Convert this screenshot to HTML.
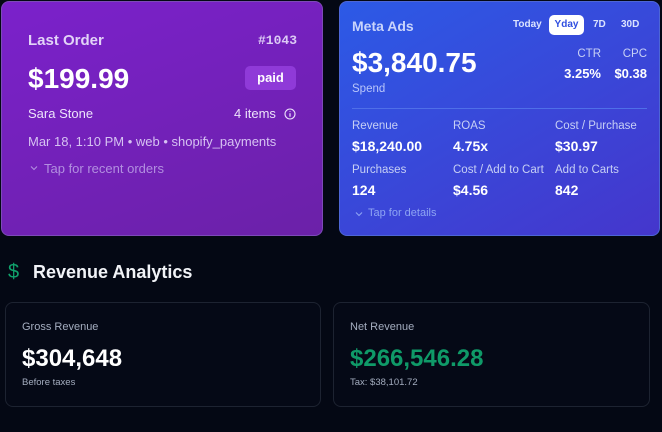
<!DOCTYPE html>
<html><head><meta charset="utf-8"><style>
*{margin:0;padding:0;box-sizing:border-box}
body{width:662px;height:432px;background:#040814;font-family:"Liberation Sans",sans-serif;position:relative;overflow:hidden;color:#fff}
.a{position:absolute;white-space:nowrap}
.c1{position:absolute;left:1px;top:1px;width:322px;height:235px;border-radius:8px;background:linear-gradient(160deg,#7b21cb,#6b21a8);border:1px solid #7d4ab8}
.c2{position:absolute;left:339px;top:1px;width:321px;height:235px;border-radius:8px;background:linear-gradient(150deg,#2c5ae6,#4536cc);border:1px solid #4d66d6}
.bc{position:absolute;top:302px;height:105px;border-radius:8px;border:1px solid #1d2331;background:#050916}
.lbl{font-size:11.5px;color:#c7d0f5}
.val{font-size:14px;font-weight:bold;color:#fff}
.r{text-align:right}
</style></head><body>
<div class="c1"></div>
<div class="a" style="left:28px;top:32px;font-size:15px;font-weight:bold;color:#e2d3f7">Last Order</div>
<div class="a" style="left:258px;top:33px;font-size:13px;font-family:'Liberation Mono',monospace;font-weight:bold;color:#dccaf5">#1043</div>
<div class="a" style="left:28px;top:63px;font-size:28px;font-weight:bold">$199.99</div>
<div class="a" style="left:245px;top:66px;width:51px;height:24px;border-radius:5px;background:#8f3ad8;font-size:13px;font-weight:bold;text-align:center;line-height:24px">paid</div>
<div class="a" style="left:28px;top:106px;font-size:13px;color:#ede3fb">Sara Stone</div>
<div class="a" style="left:234px;top:106px;font-size:13px;color:#ede3fb">4 items</div>
<svg class="a" style="left:284px;top:108px" width="12" height="12" viewBox="0 0 12 12"><circle cx="6" cy="6" r="5" fill="none" stroke="#ede3fb" stroke-width="1.1"/><path d="M6 5.2V8.8M6 3.4V4" stroke="#ede3fb" stroke-width="1.2"/></svg>
<div class="a" style="left:28px;top:134px;font-size:13px;color:#d6c2f2">Mar 18, 1:10 PM • web • shopify_payments</div>
<svg class="a" style="left:30px;top:165px" width="8" height="6" viewBox="0 0 8 6"><path d="M1 1.5L4 4.5L7 1.5" fill="none" stroke="#b28fe0" stroke-width="1.1"/></svg>
<div class="a" style="left:44px;top:161px;font-size:13px;color:#b28fe0">Tap for recent orders</div>

<div class="c2"></div>
<div class="a" style="left:352px;top:18px;font-size:14px;font-weight:bold;color:#c9d4fb">Meta Ads</div>
<div class="a" style="left:513px;top:19px;font-size:10px;font-weight:bold;color:#dbe3ff">Today</div>
<div class="a" style="left:549px;top:15px;width:35px;height:20px;border-radius:5px;background:#fff;color:#2f4ee0;font-size:10px;font-weight:bold;text-align:center;line-height:20px">Yday</div>
<div class="a" style="left:593px;top:19px;font-size:10px;font-weight:bold;color:#dbe3ff">7D</div>
<div class="a" style="left:621px;top:19px;font-size:10px;font-weight:bold;color:#dbe3ff">30D</div>
<div class="a" style="left:352px;top:47px;font-size:28px;font-weight:bold">$3,840.75</div>
<div class="a" style="left:352px;top:83px;font-size:11.5px;color:#b9c6fa">Spend</div>
<div class="a r" style="left:551px;width:50px;top:48px;font-size:11.5px;color:#c7d0f5">CTR</div>
<div class="a r" style="left:597px;width:50px;top:48px;font-size:11.5px;color:#c7d0f5">CPC</div>
<div class="a r" style="left:541px;width:60px;top:66px;font-size:13px;font-weight:bold">3.25%</div>
<div class="a r" style="left:587px;width:60px;top:66px;font-size:13px;font-weight:bold">$0.38</div>
<div class="a" style="left:352px;top:108px;width:295px;height:1px;background:#4f6fe8"></div>
<div class="a lbl" style="left:352px;top:120px">Revenue</div>
<div class="a val" style="left:352px;top:138px">$18,240.00</div>
<div class="a lbl" style="left:453px;top:120px">ROAS</div>
<div class="a val" style="left:453px;top:138px">4.75x</div>
<div class="a lbl" style="left:555px;top:120px">Cost / Purchase</div>
<div class="a val" style="left:555px;top:138px">$30.97</div>
<div class="a lbl" style="left:352px;top:164px">Purchases</div>
<div class="a val" style="left:352px;top:182px">124</div>
<div class="a lbl" style="left:453px;top:164px">Cost / Add to Cart</div>
<div class="a val" style="left:453px;top:182px">$4.56</div>
<div class="a lbl" style="left:555px;top:164px">Add to Carts</div>
<div class="a val" style="left:555px;top:182px">842</div>
<svg class="a" style="left:355px;top:211px" width="8" height="6" viewBox="0 0 8 6"><path d="M1 1.5L4 4.5L7 1.5" fill="none" stroke="#8ea4f3" stroke-width="1.1"/></svg>
<div class="a" style="left:368px;top:207px;font-size:11px;color:#8ea4f3">Tap for details</div>

<div class="a" style="left:8px;top:261px;font-size:20px;color:#10a36c">$</div>
<div class="a" style="left:33px;top:262px;font-size:18px;font-weight:bold;color:#f1f3f7">Revenue Analytics</div>

<div class="bc" style="left:5px;width:316px"></div>
<div class="a" style="left:22px;top:321px;font-size:11px;color:#a4adbf">Gross Revenue</div>
<div class="a" style="left:22px;top:345px;font-size:24px;font-weight:bold">$304,648</div>
<div class="a" style="left:22px;top:377px;font-size:9.5px;color:#a4adbf">Before taxes</div>
<div class="bc" style="left:333px;width:317px"></div>
<div class="a" style="left:350px;top:321px;font-size:11px;color:#a4adbf">Net Revenue</div>
<div class="a" style="left:350px;top:345px;font-size:24px;font-weight:bold;color:#0f9a68">$266,546.28</div>
<div class="a" style="left:350px;top:377px;font-size:9.5px;color:#a4adbf">Tax: $38,101.72</div>
</body></html>
